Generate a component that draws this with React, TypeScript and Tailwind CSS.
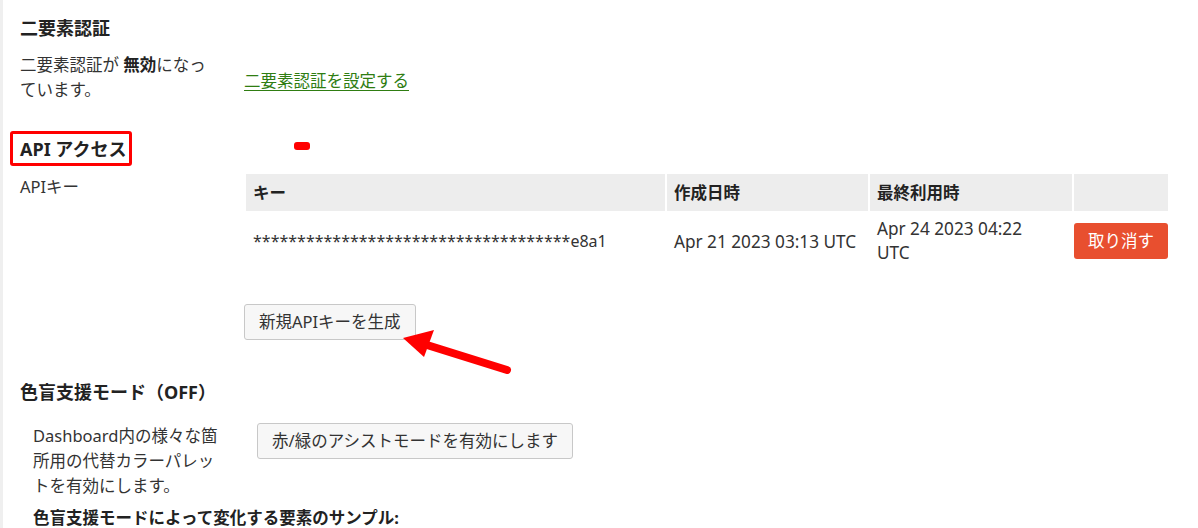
import React from "react";

const font = { fontFamily: '"Noto Sans", "Noto Sans CJK JP", sans-serif' };

export default function App() {
  return (
    <div
      style={font}
      className="relative min-h-screen bg-white border-l-[3px] border-[#efefef] text-[#333] text-[16.5px] leading-[25px] overflow-hidden"
    >
      <div className="pl-[17px] pt-[15px]">
        {/* 二要素認証 */}
        <h2 className="text-[18px] leading-[26px] font-bold text-[#222]">二要素認証</h2>
        <div className="grid grid-cols-[224px_1fr] mt-[11px]">
          <p className="pr-[28px]">
            二要素認証が <b className="font-bold text-[#222]">無効</b>になっています。
          </p>
          <div className="pt-[16px]">
            <a href="#" className="text-[#2f7d12] underline underline-offset-[3px]">
              二要素認証を設定する
            </a>
          </div>
        </div>

        {/* API アクセス */}
        <h2 className="mt-[34px] text-[18px] leading-[26px] font-bold text-[#222]">
          <span className="relative inline-block">
            API アクセス
            <span className="absolute -left-[10px] -right-[6px] -top-[5px] -bottom-[4px] border-[3px] border-[#ff0000] rounded-[3px]" />
          </span>
        </h2>
        <div className="grid grid-cols-[224px_1fr] mt-[11px]">
          <p className="pt-[1px]">APIキー</p>
          <div>
            <table className="border-separate border-spacing-[2px] -mt-[1px]">
              <thead>
                <tr className="text-left">
                  <th className="w-[419px] bg-[#ededed] px-[7px] py-[6px] font-bold text-[#222]">キー</th>
                  <th className="w-[201px] bg-[#ededed] px-[7px] py-[6px] font-bold text-[#222]">作成日時</th>
                  <th className="w-[202px] bg-[#ededed] px-[7px] py-[6px] font-bold text-[#222]">最終利用時</th>
                  <th className="bg-[#ededed] py-[6px]" />
                </tr>
              </thead>
              <tbody>
                <tr className="align-middle">
                  <td className="px-[7px] py-[4px] text-[16px]">************************************e8a1</td>
                  <td className="px-[7px] py-[4px] text-[17.2px] whitespace-nowrap">Apr 21 2023 03:13 UTC</td>
                  <td className="px-[7px] py-[4px] text-[17.2px] leading-[24px]">
                    Apr 24 2023 04:22
                    <br />
                    UTC
                  </td>
                  <td className="py-[4px]">
                    <button className="bg-[#e84f2f] text-white rounded-[3px] px-[14px] py-[5px] leading-[26px] whitespace-nowrap">
                      取り消す
                    </button>
                  </td>
                </tr>
              </tbody>
            </table>
            <button className="mt-[33px] border border-[#c8c8c8] bg-[#f7f7f7] rounded-[3px] px-[14px] py-[4px] leading-[26px] text-[#333]">
              新規APIキーを生成
            </button>
          </div>
        </div>

        {/* 色盲支援モード */}
        <h2 className="mt-[39px] text-[18px] leading-[26px] font-bold text-[#222]">色盲支援モード（OFF）</h2>
        <div className="flex items-start pl-[13px] mt-[18px]">
          <p className="w-[190px]">Dashboard内の様々な箇所用の代替カラーパレットを有効にします。</p>
          <button className="ml-[34px] border border-[#c8c8c8] bg-[#f7f7f7] rounded-[3px] px-[14px] py-[4px] leading-[26px] text-[#333] whitespace-nowrap">
            赤/緑のアシストモードを有効にします
          </button>
        </div>
        <h3 className="pl-[13px] mt-[7px] font-bold text-[#222]">色盲支援モードによって変化する要素のサンプル:</h3>
      </div>

      {/* markers */}
      <span className="absolute left-[291px] top-[142px] w-[16px] h-[8px] rounded-[3px] bg-[#ff0000]" />
      <svg className="absolute left-0 top-0 pointer-events-none" width="1198" height="528">
        <line x1="424" y1="345" x2="504" y2="370" stroke="#ff0000" strokeWidth="8" strokeLinecap="round" />
        <polygon points="400,338 431,330 421,357" fill="#ff0000" />
      </svg>
    </div>
  );
}
